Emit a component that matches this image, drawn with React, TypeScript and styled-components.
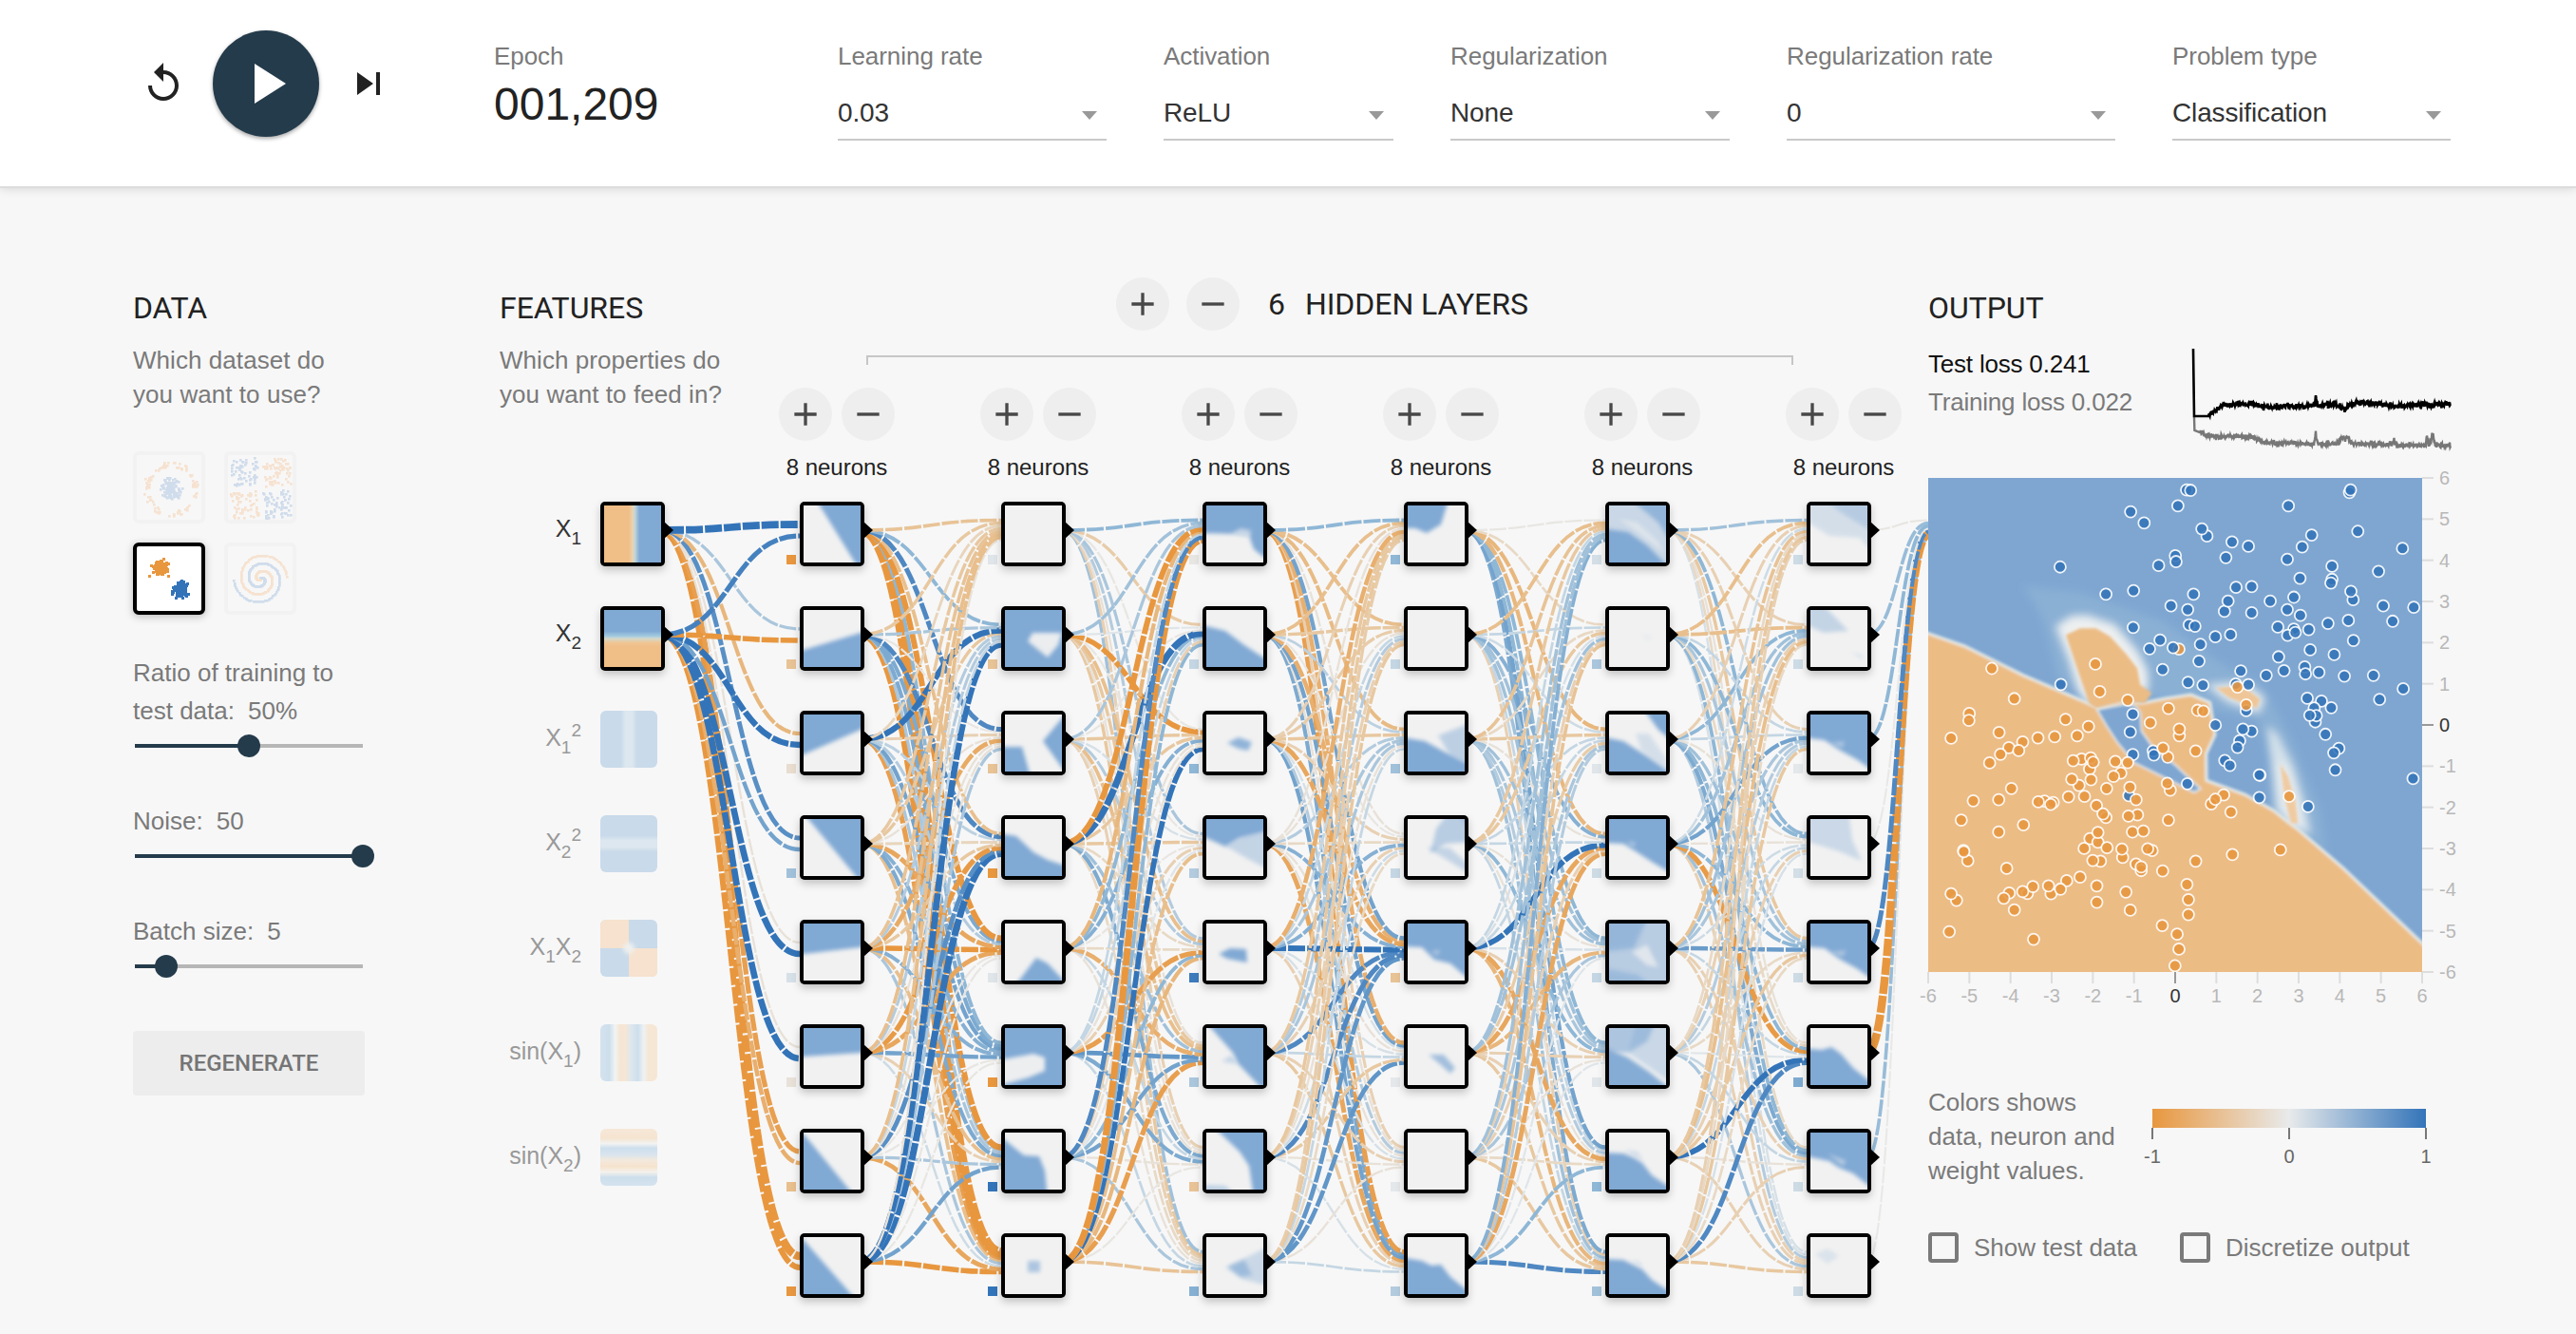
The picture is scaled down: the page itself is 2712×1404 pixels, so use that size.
import React from "react";
import styled, { createGlobalStyle, css } from "styled-components";

const ORANGE = "#e8973f";
const BLUE = "#3374b9";
const MUTED = "#7a7a7a";
const NAVY = "#243b4b";

/* ---------- helpers ---------- */

const hex = (c: string) => [1, 3, 5].map((i) => parseInt(c.slice(i, i + 2), 16));
const mix = (a: string, b: string, t: number) => {
  const p = hex(a);
  const q = hex(b);
  return `rgb(${p.map((v, i) => Math.round(v + (q[i] - v) * t)).join(",")})`;
};

// Piecewise ramp: the mid blues keep a slightly cyan cast, the mid oranges a sandy one.
const weightColor = (w: number) => {
  const t = Math.min(1, Math.abs(w));
  const [mid, end] = w < 0 ? ["#e8bf8d", ORANGE] : ["#8fb7d6", BLUE];
  return t < 0.5 ? mix("#e8eaeb", mid, t * 2) : mix(mid, end, t * 2 - 1);
};

const makeRandom = (seed: number) => () => {
  seed = (seed * 1664525 + 1013904223) % 4294967296;
  return seed / 4294967296;
};

/* ---------- network data ---------- */

// WEIGHTS[layer][destination][source]
const WEIGHTS: number[][][] = [
  [[1.6, 0.9], [0.35, -1], [-0.6, 1.2], [0.8, 0.65], [-0.1, 1.3], [-0.1, 1.3], [-0.9, -0.7], [-1.8, -1.1]],
  [
    [-0.45, -0.4, -0.25, -0.4, -0.45, -0.5, -0.5, -0.1],
    [0.5, 0.35, 1.2, -0.4, 0.3, 0.3, 0.2, 1.3],
    [0.85, -0.05, -0.3, -0.1, -0.75, -0.1, -0.1, 0.35],
    [-0.5, 0.85, 0.25, -0.25, -0.4, -0.95, 0.8, 1.4],
    [-1.1, 0.6, 0.3, -0.8, -1, -0.8, -0.05, -0.05],
    [0.5, 0.6, 0.65, 0.55, 0.55, 0.65, -0.05, -0.05],
    [-1.2, 0.35, 0.35, 0.6, -0.5, -0.3, 0.35, 0.65],
    [-1.9, -1.3, -0.9, -0.5, 0.35, 0.15, -0.8, -1],
  ],
  [
    [0.5, 0.4, 0.35, -1.1, -0.6, 0.2, 0.85, -1.4],
    [-0.35, 0.05, -0.05, 1.4, 0.5, 0.2, -0.3, 0.5],
    [-0.05, -1, -0.4, -0.4, 0.55, -0.1, -0.1, 1],
    [0.35, -0.05, 0.1, -0.4, -0.05, -0.3, 0.05, -0.5],
    [0.3, -0.5, 0.3, -0.2, -0.2, -0.9, 0.5, -0.6],
    [-0.1, -0.4, -0.5, 0.4, -0.7, 0.75, 0.65, -0.9],
    [-0.3, -0.1, -0.1, 0.6, 0.2, 0.6, -0.1, -0.05],
    [0.4, -0.4, -0.3, -0.2, -0.1, 0.2, 0.35, -0.45],
  ],
  [
    [0.5, -0.5, -0.3, -0.1, -0.7, -0.4, -0.4, -0.35],
    [-0.5, -0.4, -0.35, -0.1, 0.2, 0.3, -0.3, -0.4],
    [-0.55, 0.25, -0.4, 0.3, 0.35, 0.35, -0.1, 0.2],
    [-0.1, -0.05, -0.3, -0.2, 0.55, -0.3, 0.15, -0.2],
    [0.65, -0.7, -0.8, 0.55, 1.1, 0.85, 0.85, 0.75],
    [-0.7, 0.65, 0.1, -0.1, 0.1, 0.2, -0.4, 0.75],
    [-0.3, -0.1, 0.3, -0.1, 0.1, -0.3, -0.1, -0.1],
    [-0.9, 0.6, 0.65, -0.8, -0.3, -0.4, 0.1, 0.2],
  ],
  [
    [-0.05, -0.5, -0.45, -0.4, 0.2, 0.4, 0.4, 0.55],
    [-0.2, 0.2, -0.2, -0.4, 0.1, 0.4, -0.3, -0.45],
    [-0.6, 0.15, -0.4, 0.2, 0.2, -0.35, 0.35, 0.3],
    [-0.6, 0.55, -0.1, 0.2, 1.1, -0.8, -0.3, -0.8],
    [0.5, 0.4, 0.4, -0.1, 0.1, -0.6, 0.35, 0.05],
    [0.5, 0.4, 0.35, 0.5, -0.3, -0.3, -0.1, 0.05],
    [0.65, 0.2, 0.3, -0.1, -0.8, -0.3, -0.2, 0.5],
    [0.6, -0.3, 0.4, 0.2, -0.6, -0.4, -0.4, 0.85],
  ],
  [
    [0.4, -0.5, -0.3, 0.15, -0.45, -0.2, -0.4, -0.3],
    [-0.3, -0.5, 0.5, 0.4, 0.4, -0.3, -0.5, -0.2],
    [-0.3, 0.2, 0.2, 0.65, 0.35, 0.3, 0.2, -0.4],
    [0.5, 0.5, -0.1, -0.1, 0.15, 0.2, -0.3, 0.1],
    [-0.4, 0.35, 0.4, 0.5, 0.7, -0.2, -0.4, -0.2],
    [-0.1, -0.2, 0.5, -0.95, 0.2, 0.05, 1.1, 0.85],
    [-0.2, 0.5, 0.6, 0.4, -0.3, 0.2, -0.1, -0.3],
    [0.1, 0.1, 0.3, -0.3, -0.3, 0.35, -0.3, -0.4],
  ],
  [[-0.05, 0.45, 0.5, -0.02, 0.85, -1.8, 0.45, -0.02]],
];

const BIASES = [
  [-1, -0.45, -0.15, 0.4, 0.1, -0.1, -0.5, -1],
  [0.05, -0.45, -0.45, -1, 0.05, -1, 1, 1],
  [-0.05, 0.2, 0.5, 0.3, 0.95, 0.35, -0.45, 0.55],
  [0.5, 0.2, 0.4, 0.2, -0.45, 0.02, 0.02, 0.3],
  [0.12, 0.35, 0.05, 0.15, 0.2, 0.05, 0.5, 0.4],
  [0.15, 0.15, 0.02, 0.12, 0.15, 0.6, 0.15, 0.15],
];

// Each neuron's activation map: [polygon on a 60x60 field, strength]; a negative strength clears.
type Patch = [string, number];
const FULL = "-9,-9 69,-9 69,69 -9,69";
const MAPS: Patch[][][] = [
  [
    [["13,-9 17,0 54,60 60,69 69,69 69,-9", 1]],
    [["-9,45 0,42 60,24 69,21 69,69 -9,69", 1]],
    [["-9,46 0,42 60,16 69,12 69,-9 -9,-9", 1]],
    [["-2,-9 5,0 55,60 62,69 69,69 69,-9", 1]],
    [["-9,33 0,32 60,25 69,24 69,-9 -9,-9", 1]],
    [["-9,31 0,30 60,26 69,25 69,-9 -9,-9", 1]],
    [["-9,-6 3,5 48,60 55,69 -9,69", 1]],
    [["-9,-7 0,3 50,60 58,69 -9,69", 1]],
  ],
  [
    [],
    [[FULL, 1], ["29,24 60,24 56,37 45,50 24,33", -0.95]],
    [["-9,34 18,34 28,69 -9,69", 1], ["69,-4 60,4 40,28 60,56 69,66", 1]],
    [["-9,15 0,16 12,18 30,35 45,43 60,48 69,50 69,69 -9,69", 1]],
    [["8,69 33,36 45,42 60,58 69,69", 1]],
    [[FULL, 1], ["-9,34 30,27 42,31 42,45 25,52 0,59 -9,60", -0.97]],
    [["-9,3 0,8 20,24 36,25 42,40 45,69 -9,69", 1]],
    [["24,25 37,25 37,37 24,37", 0.6]],
  ],
  [
    [["-9,-9 69,-9 69,58 60,54 50,46 45,32 30,30 -9,29", 1], ["26,30 36,24 47,26 46,34", -0.6]],
    [["-9,15 0,17 20,22 40,37 60,50 69,54 69,69 -9,69", 1]],
    [["22,30 34,24 48,29 44,38 34,36", 0.85]],
    [["-9,-9 69,-9 69,12 35,20 20,29 0,20 -9,18", 1], ["20,28 40,18 69,12 69,55 40,40", 0.4]],
    [["13,32 25,26 42,27 43,41 22,37", 1]],
    [["-4,-9 5,0 28,26 34,38 55,60 62,69 69,69 69,-9", 1], ["16,35 26,29 34,38", 0.4]],
    [["5,-9 14,0 35,20 45,35 50,69 69,69 69,-9", 1], ["-9,55 20,56 34,69 -9,69", 0.45]],
    [["20,32 45,20 69,8 69,52 40,45", 0.35], ["23,31 40,24 48,40 36,42", 0.6]],
  ],
  [
    [["-9,-9 44,-9 35,20 20,29 8,24 -9,24", 1]],
    [],
    [["-9,25 0,25 18,28 40,40 60,50 69,54 69,69 -9,69", 1], ["32,22 69,8 69,54 45,44", 0.45]],
    [["30,10 45,-9 69,-9 69,24 40,26 24,36", 0.5], ["20,30 44,30 69,52 69,60 40,42", 0.4], ["50,-9 69,-9 69,15", 0.4]],
    [["-9,-9 69,-9 69,62 60,55 45,42 28,38 15,25 -9,24", 1], ["24,30 34,27 32,34", -0.4]],
    [["22,28 38,28 50,42 45,48 34,38", 0.7]],
    [],
    [["-9,21 15,25 25,30 35,29 45,42 60,54 69,60 69,69 -9,69", 1]],
  ],
  [
    [[FULL, 0.35], ["-9,24 20,28 40,42 60,62 60,69 -9,69", 1], ["20,-9 69,-9 69,45 52,18", 0.75], ["10,14 30,18 52,38 58,50 30,28", -0.5]],
    [["34,24 46,28 40,34", 0.08]],
    [["-9,23 15,28 40,44 60,58 69,69 -9,69", 1], ["34,-9 69,-9 69,30 52,16", 1], ["28,20 42,20 60,46 60,58 34,38", 0.25]],
    [["-9,-9 69,-9 69,58 60,54 45,45 28,34 15,26 -9,25", 1], ["18,24 28,24 26,30", -0.4]],
    [[FULL, 0.5], ["-9,-9 42,-9 26,26 -9,30", 0.6], ["-9,46 30,54 50,69 -9,69", 0.5], ["24,30 40,22 52,46 40,44", -0.7]],
    [["-9,-9 50,-9 40,14 20,26 -9,26", 0.6], ["30,-9 69,-9 69,60 20,26", 0.35], ["-9,18 20,31 42,46 62,62 62,69 -9,69", 0.95]],
    [["-9,21 15,22 25,26 35,32 45,45 60,55 69,60 69,69 -9,69", 1], ["16,18 30,20 36,30", 0.3]],
    [["-9,23 15,24 35,34 45,45 60,55 69,60 69,69 -9,69", 1], ["22,24 32,26 36,32", 0.3]],
  ],
  [
    [["-9,-9 69,-9 69,54 52,34 20,32 -9,14", 0.25], ["14,-9 69,-9 69,30 30,6", 0.35]],
    [["-9,-9 10,-9 40,22 14,24 -9,14", 0.4], ["42,44 56,48 54,52", 0.2]],
    [["-9,-9 69,-9 69,62 50,48 30,37 15,27 -9,24", 1], ["20,30 36,28 34,35", -0.4]],
    [["-9,-9 40,-9 44,22 54,44 30,34 -9,22", 0.34]],
    [["-9,-9 69,-9 69,62 50,48 30,37 15,26 -9,24", 1], ["20,30 38,28 34,35", -0.4]],
    [["-9,21 12,23 22,20 32,27 45,42 60,54 69,60 69,69 -9,69", 1]],
    [["-9,-9 69,-9 69,62 45,43 30,37 20,30 -9,24", 1], ["18,22 38,30 34,35", -0.5]],
    [["5,18 18,12 30,20 18,28", 0.2]],
  ],
];

const LAYER_X = [628, 842, 1054, 1266, 1478, 1690, 1902];
const rowY = (i: number) => 558 + 110 * i;

/* ---------- output data ---------- */

const BLUE_DOTS = "763,93 774,94 739,137 609,153 646,184 1211,100 1214,93 1043,137 1107,217 1234,207 1357,254 819,220 805,200 888,236 933,248 871,279 1081,250 732,274 734,290 686,301 415,305 1040,284 1163,303 1291,317 1163,339 1160,349 1075,336 617,370 541,380 899,361 942,359 782,380 1058,388 1221,395 1215,372 1388,416 1304,412 1330,454 720,412 766,422 867,427 877,399 942,431 993,399 1040,422 1076,438 770,464 786,468 616,471 1208,452 1152,460 1014,470 1058,476 1041,493 1062,485 1099,477 884,491 842,497 1222,507 801,518 690,506 661,530 726,527 1103,533 1169,546 797,564 1016,552 697,587 912,591 1031,590 982,603 1088,580 1090,599 1127,595 1197,605 1277,603 417,628 767,622 808,630 898,627 933,629 1359,640 1294,669 1095,666 1134,674 1161,692 1114,693 927,700 1117,731 1120,714 1102,713 615,710 842,740 942,757 918,751 608,759 909,783 903,801 1145,765 1182,804 1168,816 1172,863 1386,887 868,837 882,851 615,821 671,811 673,822 965,878 963,877 765,901 963,939 1097,964 604,934"
  .split(" ");
const ORANGE_DOTS = "512,572 227,584 524,648 601,671 289,667 903,635 927,684 713,694 793,699 809,701 165,708 164,727 430,724 493,744 663,733 743,769 743,751 247,760 462,769 400,772 354,775 115,776 312,786 274,802 301,810 251,820 221,844 788,811 711,828 698,803 474,833 451,838 499,830 496,861 506,842 567,840 601,843 582,872 562,881 467,906 447,889 500,890 543,914 607,911 718,919 710,900 281,914 438,937 482,936 176,948 246,945 624,945 372,949 396,953 355,951 389,958 515,961 865,932 831,957 842,944 885,979 1045,936 541,994 533,984 628,987 603,990 143,1001 713,1001 314,1014 246,1034 614,1034 644,1031 497,1052 519,1062 519,1035 544,1077 481,1079 149,1085 161,1113 150,1088 587,1104 585,1081 668,1085 656,1080 1021,1083 889,1096 788,1114 526,1114 505,1112 624,1122 638,1140 638,1130 697,1141 268,1134 470,1158 433,1168 390,1204 383,1182 416,1191 325,1203 340,1184 312,1198 275,1202 260,1216 130,1222 115,1204 516,1182 516,1227 596,1199 764,1178 768,1220 768,1261 608,1249 289,1248 696,1291 737,1315 110,1308 742,1356 342,1329 731,1402"
  .split(" ");
const DOT_GROUPS: [string, string[]][] = [
  [ORANGE, ["742,531"]],
  [BLUE, BLUE_DOTS],
  [ORANGE, ORANGE_DOTS],
];

const wiggle = (points: number[][], noise: number, seed: number) => {
  const random = makeRandom(seed);
  const out: string[] = [];
  points.forEach(([x, y], i) => {
    if (i === 0) return void out.push(`${x},${y}`);
    const [px, py] = points[i - 1];
    const steps = Math.max(1, Math.floor((x - px) * 2));
    for (let s = 1; s <= steps; s++) {
      const t = s / steps;
      const jitter = x < 24 ? 0 : (random() - 0.5) * noise * (random() > 0.88 ? 2 : 1);
      out.push(`${(px + (x - px) * t).toFixed(1)},${(py + (y - py) * t + jitter).toFixed(1)}`);
    }
  });
  return out.join(" ");
};
const TEST_LOSS = wiggle(
  [[3, 7], [4, 78], [19, 78], [25, 73], [33, 67], [50, 65], [64, 65], [80, 68], [131, 67], [132, 55], [134, 67], [150, 65], [162, 70], [174, 63], [200, 65], [214, 68], [240, 66], [274, 65]],
  4.5,
  11,
);
const TRAIN_LOSS = wiggle(
  [[4, 79], [4.4, 93], [10, 95], [24, 100], [50, 99], [66, 100], [76, 106], [130, 107], [132, 95], [134, 107], [154, 107], [159, 101], [166, 101], [171, 107], [212, 108], [214, 103], [217, 108], [248, 109], [249, 97], [251, 109], [255, 98], [258, 109], [274, 109]],
  4,
  5,
);

/* ---------- styled parts ---------- */

const GlobalStyle = createGlobalStyle`
  * { box-sizing: border-box; }
  body {
    margin: 0;
    background: #f7f7f7;
    font-family: "Liberation Sans", Arial, sans-serif;
    color: #222;
    overflow: hidden;
  }
  svg { display: block; }
`;

const Page = styled.div`
  width: 2712px;
  height: 1404px;
  overflow: hidden;
  background: #f7f7f7;
`;

const TopBar = styled.header`
  position: relative;
  display: flex;
  height: 196px;
  padding-left: 148px;
  background: #fff;
  box-shadow: 0 2px 0 #dcdcdc, 0 2px 10px rgba(0, 0, 0, 0.16);
`;

const Timeline = styled.div`
  display: flex;
  align-items: center;
  gap: 28px;
  width: 372px;
  height: 176px;
`;

const IconButton = styled.button<{ $primary?: boolean }>`
  display: flex;
  align-items: center;
  justify-content: center;
  padding: 0;
  border: 0;
  border-radius: 50%;
  width: 48px;
  height: 48px;
  background: none;
  ${(p) =>
    p.$primary &&
    css`
      width: 112px;
      height: 112px;
      background: ${NAVY};
      box-shadow: 0 2px 4px rgba(0, 0, 0, 0.35);
    `}
`;

const Field = styled.div<{ $width: number }>`
  width: ${(p) => p.$width}px;
  padding-top: 44px;
`;

const Fields = styled.div`
  display: flex;
  gap: 60px;
`;

const Label = styled.div`
  font-size: 26px;
  line-height: 30px;
  letter-spacing: -0.05px;
  color: ${MUTED};
`;

const EpochValue = styled.div`
  margin-top: 9px;
  font-size: 48px;
  line-height: 54px;
`;

const SelectBox = styled.div`
  display: flex;
  justify-content: space-between;
  margin-top: 28px;
  height: 46px;
  padding-top: 1px;
  border-bottom: 2px solid #c9c9c9;
  font-size: 28px;
  line-height: 32px;
  letter-spacing: -0.15px;
  color: #333;
`;

const Caret = styled.i`
  width: 0;
  height: 0;
  margin: 14px 10px 0 0;
  border: 8px solid transparent;
  border-top: 9px solid #999;
  border-bottom: 0;
`;

const Main = styled.main`
  display: flex;
  padding: 96px 0 0 140px;
`;

const Title = styled.h4`
  margin: 13px 0 0;
  font: 400 32px/38px Roboto, sans-serif;
  letter-spacing: -0.05px;
  color: #222;
`;

const Hint = styled.p`
  margin: 18px 0 0;
  font-size: 26px;
  line-height: 36px;
  letter-spacing: 0.06px;
  white-space: pre;
  color: ${MUTED};
`;

const DataColumn = styled.section`
  width: 386px;
`;

const DatasetGrid = styled.div`
  display: grid;
  grid-template-columns: 76px 76px;
  gap: 20px;
  margin-top: 42px;
`;

const Dataset = styled.div<{ $selected?: boolean }>`
  width: 76px;
  height: 76px;
  border: 4px solid ${(p) => (p.$selected ? "#000" : "#f2f2f2")};
  border-radius: 6px;
  background: ${(p) => (p.$selected ? "#fff" : "transparent")};
  box-shadow: ${(p) => (p.$selected ? "0 2px 8px rgba(0,0,0,.25)" : "none")};
`;

const SliderLabel = styled.div<{ $top: number }>`
  margin-top: ${(p) => p.$top}px;
  font-size: 26px;
  line-height: 40px;
  color: ${MUTED};
`;

const LabelLine = styled.div`
  display: flex;
  gap: 14px;
`;

const SliderRow = styled.div`
  display: flex;
  align-items: center;
  width: 240px;
  height: 24px;
  margin: 5px 0 0 2px;
`;

const Track = styled.div<{ $part: number; $filled?: boolean }>`
  width: ${(p) => p.$part * 240}px;
  height: 4px;
  background: ${(p) => (p.$filled ? NAVY : "#b6b6b6")};
`;

const Knob = styled.div`
  flex: none;
  position: relative;
  width: 24px;
  height: 24px;
  margin: 0 -12px;
  border-radius: 50%;
  background: ${NAVY};
`;

const Regenerate = styled.button`
  width: 244px;
  height: 68px;
  margin-top: 56px;
  padding: 0;
  border: 0;
  border-radius: 4px;
  background: #ededed;
  font: 500 24px/68px Roboto, sans-serif;
  color: #757575;
`;

const NetworkColumn = styled.section`
  width: 1504px;
`;

const NetworkHead = styled.div`
  display: flex;
  height: 220px;
`;

const FeaturesHead = styled.div`
  width: 294px;
`;

const HiddenHead = styled.div`
  width: 1194px;
`;

const LayerControls = styled.div`
  display: flex;
  align-items: center;
  height: 56px;
  padding-left: 355px;
  gap: 18px;
`;

const RoundButton = styled.button`
  display: flex;
  align-items: center;
  justify-content: center;
  width: 56px;
  height: 56px;
  padding: 0;
  border: 0;
  border-radius: 50%;
  background: #eee;
`;

const LayerCount = styled.div`
  display: flex;
  gap: 21px;
  padding-left: 12px;
  font: 400 32px/38px Roboto, sans-serif;
  letter-spacing: -0.05px;
`;

const Bracket = styled.div`
  width: 976px;
  height: 10px;
  margin: 26px 0 0 92px;
  border: 2px solid #c6c6c6;
  border-bottom: 0;
`;

const NeuronControls = styled.div`
  display: grid;
  grid-template-columns: repeat(6, 122px);
  column-gap: 90px;
  margin-top: 24px;
`;

const ButtonPair = styled.div`
  display: flex;
  gap: 10px;
`;

const NeuronCount = styled.div`
  margin-top: 14px;
  font-size: 24px;
  line-height: 28px;
  text-align: center;
`;

const Diagram = styled.svg`
  text {
    font-size: 25px;
  }
`;

const OutputColumn = styled.section`
  width: 600px;
`;

const LossRow = styled.div`
  display: flex;
  margin-top: 17px;
`;

const LossText = styled.div`
  width: 276px;
  padding-top: 3px;
  font-size: 26px;
  line-height: 40px;
  letter-spacing: -0.2px;
  white-space: nowrap;
`;

const LossLine = styled.div<{ $muted?: boolean }>`
  color: ${(p) => (p.$muted ? MUTED : "#111")};
`;

const Plot = styled.svg`
  margin-top: 28px;
  overflow: visible;
  text {
    font-size: 20px;
  }
`;

const LegendRow = styled.div`
  display: flex;
  height: 108px;
  margin-top: 79px;
`;

const LegendText = styled.div`
  width: 236px;
  font-size: 26px;
  line-height: 36px;
  white-space: pre;
  color: ${MUTED};
`;

const LegendScale = styled.svg`
  margin-top: 25px;
  overflow: visible;
  text {
    font-size: 20px;
    fill: #666;
  }
`;

const Checks = styled.div`
  display: grid;
  grid-template-columns: 265px auto;
  margin-top: 47px;
`;

const Check = styled.label`
  display: flex;
  align-items: center;
  gap: 16px;
  height: 32px;
  font-size: 26px;
  line-height: 32px;
  color: ${MUTED};
`;

const Box = styled.span`
  width: 32px;
  height: 32px;
  border: 4px solid #7a7a7a;
  border-radius: 4px;
`;

/* ---------- components ---------- */

const Icon = ({ d, size, fill }: { d: string; size: number; fill: string }) => (
  <svg width={size} height={size} viewBox="0 0 24 24" fill={fill}>
    <path d={d} />
  </svg>
);
const ICONS = {
  replay: "M12 5V1L7 6l5 5V7c3.31 0 6 2.69 6 6s-2.69 6-6 6-6-2.69-6-6H4c0 4.42 3.58 8 8 8s8-3.58 8-8-3.58-8-8-8z",
  play: "M8 5v14l11-7z",
  next: "M6 18l8.5-6L6 6v12zM16 6v12h2V6h-2z",
  add: "M19 13h-6v6h-2v-6H5v-2h6V5h2v6h6v2z",
  remove: "M19 13H5v-2h14v2z",
};

const PlusMinus = () => (
  <>
    <RoundButton>
      <Icon d={ICONS.add} size={40} fill="#484848" />
    </RoundButton>
    <RoundButton>
      <Icon d={ICONS.remove} size={40} fill="#484848" />
    </RoundButton>
  </>
);

const Select = ({ label, value, width }: { label: string; value: string; width: number }) => (
  <Field $width={width}>
    <Label>{label}</Label>
    <SelectBox>
      {value}
      <Caret />
    </SelectBox>
  </Field>
);

const Slider = ({ value }: { value: number }) => (
  <SliderRow>
    <Track $part={value} $filled />
    <Knob />
    <Track $part={1 - value} />
  </SliderRow>
);

type Kind = "circle" | "xor" | "gauss" | "spiral";
const datasetPoints = (kind: Kind) => {
  const random = makeRandom(kind.length * 97 + 3);
  const normal = () => random() + random() + random() + random() - 2;
  const points: [number, number, boolean][] = [];
  for (let i = 0; i < 130; i++) {
    if (kind === "circle") {
      const a = random() * Math.PI * 2;
      const b = random() * Math.PI * 2;
      const r = random() * 13;
      const s = 23 + random() * 6;
      points.push([36 + r * Math.cos(a), 36 + r * Math.sin(a), true]);
      if (i < 90) points.push([36 + s * Math.cos(b), 36 + s * Math.sin(b), false]);
    } else if (kind === "xor") {
      const x = random() * 60 - 30;
      const y = random() * 60 - 30;
      const gap = (v: number) => v + (v > 0 ? 2 : -2);
      points.push([35 + gap(x), 35 + gap(y), x * y > 0]);
      points.push([35 + gap(y), 35 - gap(x), x * y < 0]);
    } else if (kind === "gauss") {
      points.push([24.5 + normal() * 5.8, 22 + normal() * 5.8, false]);
      points.push([46 + normal() * 5.8, 46 + normal() * 5.8, true]);
    } else {
      [0, Math.PI].forEach((shift) => {
        const f = i / 130;
        const t = 1.75 * f * 2 * Math.PI + shift;
        points.push([34 + f * 28.3 * Math.sin(t), 34 - f * 28.3 * Math.cos(t), shift === 0]);
      });
    }
  }
  if (kind === "gauss") points.push([13, 31, false], [33, 31, false], [47, 36, true], [37, 50, true]);
  return points;
};

const DatasetThumb = ({ kind, selected }: { kind: Kind; selected?: boolean }) => (
  <Dataset $selected={selected}>
    <svg width="68" height="68">
      {datasetPoints(kind).map(([x, y, positive], i) => (
        <rect
          key={i}
          x={Math.round(x) - 1}
          y={Math.round(y) - 1}
          width={kind === "gauss" ? 3 : 2.6}
          height={kind === "gauss" ? 3 : 2.6}
          fill={selected ? (positive ? BLUE : ORANGE) : positive ? "#d0dceb" : "#f6e2d0"}
        />
      ))}
    </svg>
  </Dataset>
);

const Frame = ({ x, y, children }: { x: number; y: number; children?: React.ReactNode }) => (
  <g>
    <rect x={x} y={y} width="68" height="68" rx="5" fill="#000" filter="url(#shadow)" />
    <g transform={`translate(${x + 4},${y + 4})`} clipPath="url(#cell)">
      <rect width="60" height="60" fill="#f1f1f1" />
      {children}
    </g>
    <path d={`M${x + 67},${y + 21}l10,9l-10,9z`} fill="#000" />
  </g>
);

const Gradient = ({ id, vertical, stops }: { id: string; vertical?: boolean; stops: [number, string][] }) => (
  <linearGradient id={id} x1="0" y1="0" x2={vertical ? 0 : 1} y2={vertical ? 1 : 0}>
    {stops.map(([offset, color]) => (
      <stop key={offset} offset={offset} stopColor={color} />
    ))}
  </linearGradient>
);

const Sub = ({ children }: { children: string }) => (
  <tspan dy="8" fontSize="19">
    {children}
  </tspan>
);
const Sup = ({ children }: { children: string }) => (
  <tspan dy="-18" fontSize="19">
    {children}
  </tspan>
);
const Back = ({ children }: { children: string }) => <tspan dy="-8">{children}</tspan>;

const FEATURES = [
  { id: "x1", label: <>X<Sub>1</Sub></> },
  { id: "x2", label: <>X<Sub>2</Sub></> },
  { id: "x1sq", label: <>X<Sub>1</Sub><Sup>2</Sup></> },
  { id: "x2sq", label: <>X<Sub>2</Sub><Sup>2</Sup></> },
  { id: "x1x2", label: <>X<Sub>1</Sub><Back>X</Back><Sub>2</Sub></> },
  { id: "sinx1", label: <>sin(X<Sub>1</Sub><Back>)</Back></> },
  { id: "sinx2", label: <>sin(X<Sub>2</Sub><Back>)</Back></> },
];

const Links = () => {
  const paths: React.ReactNode[] = [];
  WEIGHTS.forEach((layer, l) => {
    const x0 = l === 0 ? 696 : LAYER_X[l] + 64;
    const x1 = l === 6 ? 2030 : LAYER_X[l + 1];
    const xm = (x0 + x1) / 2;
    layer.forEach((sources, d) =>
      sources.forEach((w, s) => {
        const y0 = rowY(s);
        const y1 = rowY(d) + ((s - (sources.length - 1) / 2) / sources.length) * 24;
        paths.unshift(
          <path
            key={`${l}-${d}-${s}`}
            d={`M${x0},${y0}C${xm},${y0} ${xm},${y1} ${x1},${y1}`}
            stroke={weightColor(w)}
            strokeWidth={2 + 3.6 * Math.abs(w)}
          />,
        );
      }),
    );
  });
  return (
    <g fill="none" strokeDasharray="18 2" strokeDashoffset="14">
      {paths}
    </g>
  );
};

const NetworkDiagram = () => (
  <Diagram width="1504" height="892" viewBox="526 512 1504 892">
    <defs>
      <clipPath id="cell">
        <rect width="60" height="60" />
      </clipPath>
      <filter id="soft" filterUnits="userSpaceOnUse" x="-12" y="-12" width="84" height="84">
        <feGaussianBlur stdDeviation="2.1" />
      </filter>
      <filter id="shadow" x="-20%" y="-20%" width="140%" height="150%">
        <feDropShadow dx="0" dy="4" stdDeviation="4" floodOpacity=".22" />
      </filter>
      <Gradient id="x1" stops={[[0, "#f0be87"], [0.43, "#f0be87"], [0.5, "#ead2ae"], [0.54, "#c2d6da"], [0.62, "#80a9d4"], [1, "#80a9d4"]]} />
      <Gradient id="x2" vertical stops={[[0, "#80a9d4"], [0.37, "#80a9d4"], [0.46, "#a3cbe0"], [0.5, "#d4d8cc"], [0.58, "#f0c490"], [0.65, "#f0be87"], [1, "#f0be87"]]} />
      <Gradient id="x1sq" stops={[[0, "#c9daea"], [0.36, "#c9daea"], [0.44, "#dce7ef"], [0.56, "#dce7ef"], [0.64, "#c9daea"], [1, "#c9daea"]]} />
      <Gradient id="x2sq" vertical stops={[[0, "#c9daea"], [0.36, "#c9daea"], [0.44, "#dce7ef"], [0.56, "#dce7ef"], [0.64, "#c9daea"], [1, "#c9daea"]]} />
      <Gradient id="sinx1" stops={[[0, "#d4e2ee"], [0.16, "#cddfec"], [0.26, "#f2f3f3"], [0.35, "#f6e5d2"], [0.45, "#f5e6d6"], [0.53, "#dfe7ee"], [0.66, "#cddfec"], [0.76, "#eef1f3"], [0.84, "#f5e7d6"], [1, "#f6e6d4"]]} />
      <Gradient id="sinx2" vertical stops={[[0, "#f6e7d8"], [0.16, "#f5e4d0"], [0.26, "#f2f2f1"], [0.34, "#cddfec"], [0.45, "#d8e4ee"], [0.55, "#f3e9dd"], [0.66, "#f6e3cd"], [0.76, "#f4f1ec"], [0.85, "#cddfec"], [1, "#d4e2ee"]]} />
    </defs>
    <Links />
    {FEATURES.map((f, i) => (
      <g key={f.id}>
        <text x="612" y={rowY(i) + 7} textAnchor="end" fill={i < 2 ? "#333" : "#999"}>
          {f.label}
        </text>
        {i < 2 ? (
          <Frame x={632} y={rowY(i) - 30}>
            <rect width="60" height="60" fill={`url(#${f.id})`} />
          </Frame>
        ) : f.id === "x1x2" ? (
          <g transform={`translate(632,${rowY(i) - 30})`}>
            <rect width="60" height="60" rx="6" fill="#c9daea" />
            <path d="M6,0H30V30H0V6Q0,0 6,0zM30,30H60V54Q60,60 54,60H30z" fill="#f6e2ce" />
            <circle cx="30" cy="30" r="6" fill="#eef0ee" filter="url(#soft)" />
          </g>
        ) : (
          <rect x="632" y={rowY(i) - 30} width="60" height="60" rx="6" fill={`url(#${f.id})`} />
        )}
      </g>
    ))}
    {MAPS.map((layer, l) =>
      layer.map((patches, i) => (
        <g key={`${l}-${i}`}>
          <rect x={LAYER_X[l + 1] - 14} y={rowY(i) + 26} width="10" height="10" fill={weightColor(BIASES[l][i])} />
          <Frame x={LAYER_X[l + 1]} y={rowY(i) - 30}>
            {patches.map(([points, strength], k) => (
              <polygon
                key={k}
                points={points}
                fill={strength < 0 ? "#f1f1f1" : "#80a9d4"}
                opacity={Math.abs(strength)}
                filter="url(#soft)"
              />
            ))}
          </Frame>
        </g>
      )),
    )}
  </Diagram>
);

// Regions of the decision surface, in thirds of a pixel from the point (100, 97) of the plot.
const LAND = "-340,186 -300,200 -185,240 0,332 70,362 200,418 235,434 320,412 375,420 450,405 530,393 590,418 606,520 578,580 579,664 700,708 790,758 840,798 870,820 940,880 1010,940 1260,1178 1300,1216 1300,1310 -340,1310";
const ISLAND = "135,205 180,184 230,184 275,210 325,265 360,310 370,362 406,388 385,420 320,414 230,436 208,420 170,310";
const ISLAND_HALO = "112,180 155,152 200,150 285,178 355,260 386,320 388,372 300,420 205,415 180,380 150,280";
const INLET = "610,372 670,367 705,374 748,408 738,436 700,422 650,403";
const SLIVER = "812,612 836,650 860,730 868,800 846,800 826,720";
const POCKET = "233,440 320,424 355,428 370,450 374,508 410,560 480,615 560,690 540,702 440,652 350,608 298,545 262,490";

const OutputPlot = () => (
  <Plot width="580" height="560" viewBox="0 0 580 560">
    <svg width="520" height="520" viewBox="52 60 1359 1359">
      <defs>
        <filter id="edge" x="-10%" y="-10%" width="120%" height="120%">
          <feGaussianBlur stdDeviation="4" />
        </filter>
        <filter id="halo" x="-50%" y="-50%" width="200%" height="200%">
          <feGaussianBlur stdDeviation="13" />
        </filter>
      </defs>
      <rect x="52" y="60" width="1359" height="1359" fill="#7ea6d1" />
      <g transform="translate(313.3 313.5) scale(.8712)">
        <g filter="url(#halo)">
          <polygon points="0,50 180,70 440,160 620,290 760,370 840,520 940,760 960,900 860,820 740,470 400,400 230,430 110,340 60,150" fill="#9dbfd9" opacity=".38" />
          <polygon points={ISLAND_HALO} fill="#eef0f0" stroke="#e6ecef" strokeWidth="16" />
          <polygon points={INLET} fill="#eef0ee" stroke="#e2e9ed" strokeWidth="26" />
          <polygon points="775,500 800,520 850,620 885,740 905,830 870,820 800,760 790,640" fill="#d3e1ea" stroke="#d3e1ea" strokeWidth="8" />
          <polygon points={SLIVER} fill="#f4f0ea" stroke="#e6ebee" strokeWidth="26" />
        </g>
        <g filter="url(#edge)">
          <polygon points={LAND} fill="#ecbc85" stroke="#e6ebe8" strokeWidth="9" />
          <polygon points={INLET} fill="#efc698" />
          <polygon points={SLIVER} fill="#f0cba2" />
          <polygon points={POCKET} fill="#7ea6d1" stroke="#dfe6e6" strokeWidth="6" />
        </g>
        <g filter="url(#edge)">
          <polygon points={ISLAND} fill="#ecbc85" />
        </g>
      </g>
      {DOT_GROUPS.map(([color, dots], k) =>
        dots.map((dot) => {
          const [cx, cy] = dot.split(",");
          return <circle key={`${k}-${dot}`} cx={cx} cy={cy} r="15.7" fill={color} stroke="#fff" strokeWidth="4.6" opacity=".88" />;
        }),
      )}
    </svg>
    {Array.from({ length: 13 }, (_, i) => {
      const v = i - 6;
      const at = (i * 520) / 12;
      const zero = v === 0;
      return (
        <g key={v} fill={zero ? "#333" : "#b8b8b8"} stroke="none">
          <rect x={at - 1} y="520" width="2" height="12" fill={zero ? "#999" : "#ddd"} />
          <text x={at} y="552" textAnchor="middle">
            {v}
          </text>
          <rect x="520" y={519 - at} width="12" height="2" fill={zero ? "#999" : "#ddd"} />
          <text x="538" y={527 - at}>
            {v}
          </text>
        </g>
      );
    })}
  </Plot>
);

export default function App() {
  return (
    <Page>
      <GlobalStyle />
      <TopBar>
        <Timeline>
          <IconButton>
            <Icon d={ICONS.replay} size={48} fill="#222" />
          </IconButton>
          <IconButton $primary>
            <Icon d={ICONS.play} size={72} fill="#fff" />
          </IconButton>
          <IconButton>
            <Icon d={ICONS.next} size={48} fill="#222" />
          </IconButton>
        </Timeline>
        <Field $width={362}>
          <Label>Epoch</Label>
          <EpochValue>001,209</EpochValue>
        </Field>
        <Fields>
          <Select label="Learning rate" value="0.03" width={283} />
          <Select label="Activation" value="ReLU" width={242} />
          <Select label="Regularization" value="None" width={294} />
          <Select label="Regularization rate" value="0" width={346} />
          <Select label="Problem type" value="Classification" width={293} />
        </Fields>
      </TopBar>
      <Main>
        <DataColumn>
          <Title>DATA</Title>
          <Hint>{"Which dataset do\nyou want to use?"}</Hint>
          <DatasetGrid>
            <DatasetThumb kind="circle" />
            <DatasetThumb kind="xor" />
            <DatasetThumb kind="gauss" selected />
            <DatasetThumb kind="spiral" />
          </DatasetGrid>
          <SliderLabel $top={41}>
            <LabelLine>Ratio of training to</LabelLine>
            <LabelLine>
              <span>test data:</span>
              <span>50%</span>
            </LabelLine>
          </SliderLabel>
          <Slider value={0.5} />
          <SliderLabel $top={47}>
            <LabelLine>
              <span>Noise:</span>
              <span>50</span>
            </LabelLine>
          </SliderLabel>
          <Slider value={1} />
          <SliderLabel $top={47}>
            <LabelLine>
              <span>Batch size:</span>
              <span>5</span>
            </LabelLine>
          </SliderLabel>
          <Slider value={4 / 29} />
          <Regenerate>REGENERATE</Regenerate>
        </DataColumn>
        <NetworkColumn>
          <NetworkHead>
            <FeaturesHead>
              <Title>FEATURES</Title>
              <Hint>{"Which properties do\nyou want to feed in?"}</Hint>
            </FeaturesHead>
            <HiddenHead>
              <LayerControls>
                <PlusMinus />
                <LayerCount>
                  <span>6</span>
                  <span>HIDDEN LAYERS</span>
                </LayerCount>
              </LayerControls>
              <Bracket />
              <NeuronControls>
                {BIASES.map((_, i) => (
                  <div key={i}>
                    <ButtonPair>
                      <PlusMinus />
                    </ButtonPair>
                    <NeuronCount>8 neurons</NeuronCount>
                  </div>
                ))}
              </NeuronControls>
            </HiddenHead>
          </NetworkHead>
          <NetworkDiagram />
        </NetworkColumn>
        <OutputColumn>
          <Title>OUTPUT</Title>
          <LossRow>
            <LossText>
              <LossLine>Test loss 0.241</LossLine>
              <LossLine $muted>Training loss 0.022</LossLine>
            </LossText>
            <svg width="276" height="115">
              <polyline points={TRAIN_LOSS} fill="none" stroke="#777" strokeWidth="2.4" />
              <polyline points={TEST_LOSS} fill="none" stroke="#000" strokeWidth="2.6" />
            </svg>
          </LossRow>
          <OutputPlot />
          <LegendRow>
            <LegendText>{"Colors shows\ndata, neuron and\nweight values."}</LegendText>
            <LegendScale width="288" height="60">
              <defs>
                <Gradient id="scale" stops={[[0, ORANGE], [0.5, "#e8eaeb"], [1, BLUE]]} />
              </defs>
              <rect width="288" height="20" fill="url(#scale)" />
              {[-1, 0, 1].map((v) => (
                <g key={v}>
                  <rect x={143 + v * 144} y="20" width="2" height="12" fill="#777" />
                  <text x={144 + v * 144} y="57" textAnchor="middle">
                    {v}
                  </text>
                </g>
              ))}
            </LegendScale>
          </LegendRow>
          <Checks>
            <Check>
              <Box />
              Show test data
            </Check>
            <Check>
              <Box />
              Discretize output
            </Check>
          </Checks>
        </OutputColumn>
      </Main>
    </Page>
  );
}
